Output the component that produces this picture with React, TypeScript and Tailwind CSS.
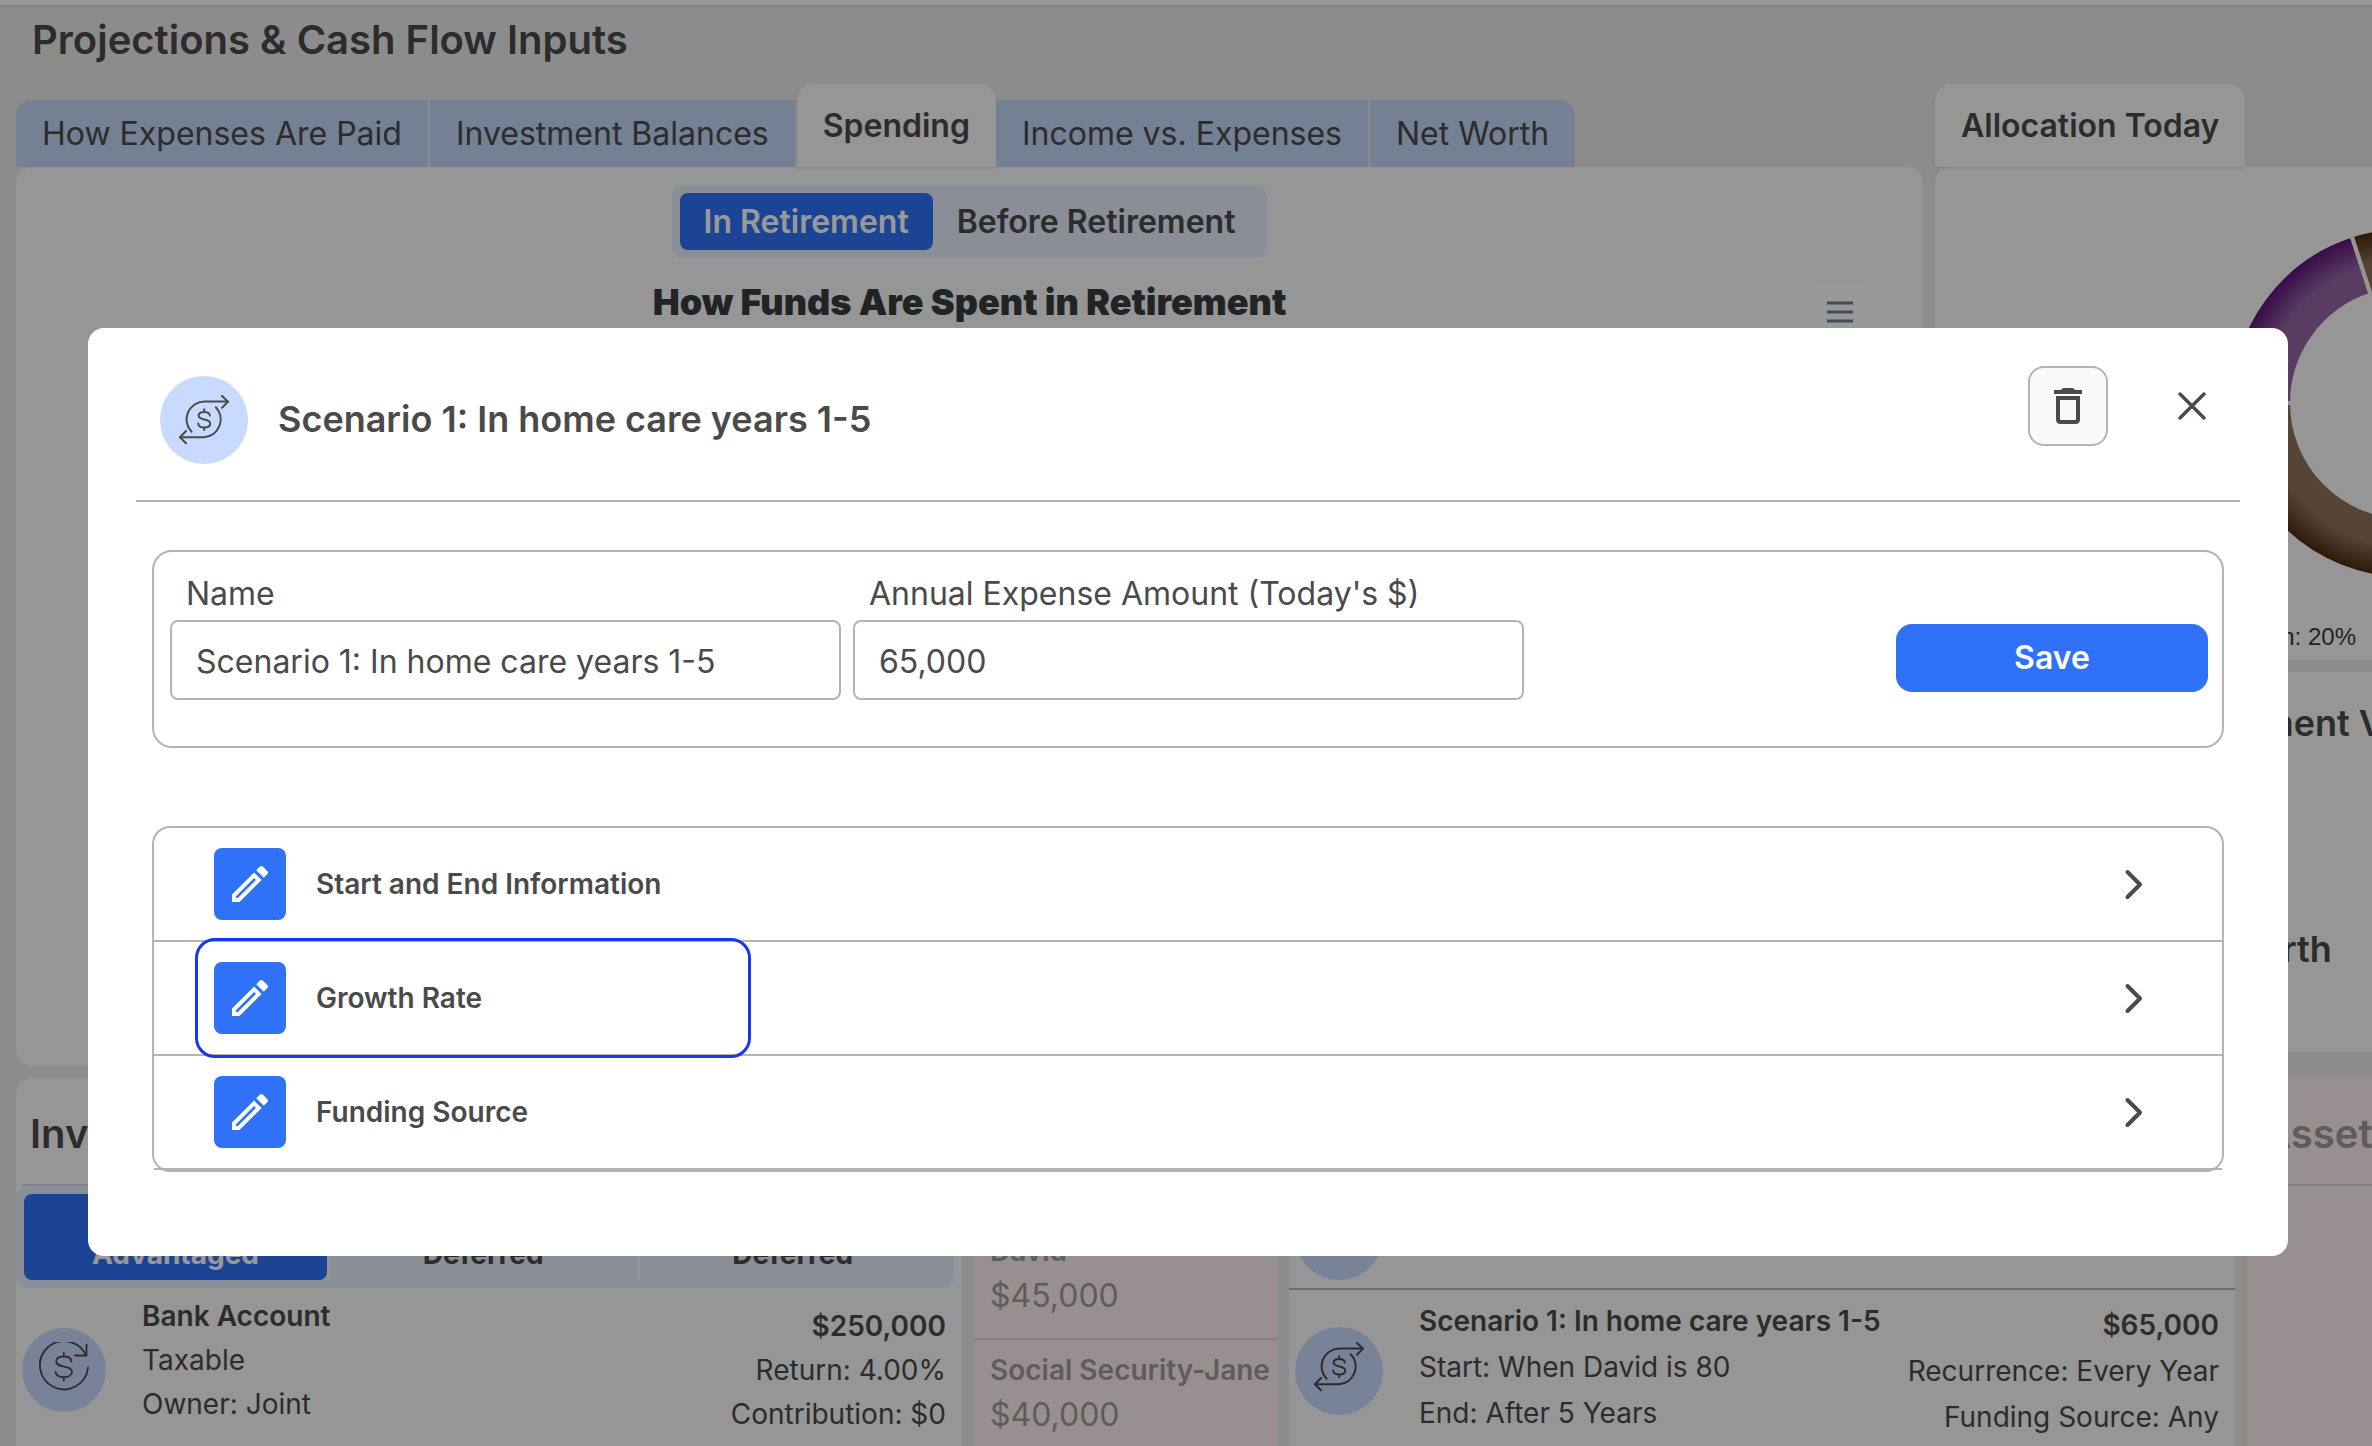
import React, { useState } from 'react';
import { MdDeleteOutline, MdOutlineEdit } from 'react-icons/md';

interface DetailRowProps {
  icon: React.ReactNode;
  title: string;
  lines: string[];
  amount: string;
  amountLines: string[];
  className: string;
  amountClassName: string;
}

const chartTabs = ['How Expenses Are Paid', 'Investment Balances', 'Spending', 'Income vs. Expenses', 'Net Worth'];
const sections = ['Start and End Information', 'Growth Rate', 'Funding Source'];
const accountTypes = ['Advantaged', 'Deferred', 'Deferred'];

function SwapDollarIcon() {
  return (
    <svg className="size-[50px]" viewBox="0 0 50 50" fill="none" stroke="#4a4a4a" strokeWidth="2" strokeLinecap="round" strokeLinejoin="round">
      <path d="M12.6 36.8A17.8 17.8 0 0 1 25 6.6H49" />
      <path d="M43 .9l6 5.7-6 6.2" />
      <path d="M36.8 12.2A17.8 17.8 0 0 1 25 42.2H1" />
      <path d="M7 36L1 42.2l6 6" />
      <path d="M30.8 20.6c0-2.2-2.4-3.7-5.6-3.7s-5.6 1.5-5.6 3.9c0 5 11.6 2.4 11.6 7.6 0 2.5-2.6 4-6 4s-6-1.6-6-3.9M25.2 14.2v2.5M25.2 32.6V35" />
    </svg>
  );
}

function RecurringDollarIcon() {
  return (
    <svg className="size-[50px]" viewBox="0 0 50 50" fill="none" stroke="#4a4a4a" strokeWidth="1.8" strokeLinecap="round" strokeLinejoin="round">
      <path d="M49 25.5A24.1 24.1 0 1 1 47 13.4" />
      <path d="M47.5 2.5v11H36" />
      <path d="M32.4 19.5c0-3-3-5-7.6-5s-7.6 2-7.6 5.1c0 6.8 15.8 3.3 15.8 10.2 0 3.3-3.5 5.4-8.2 5.4s-8.2-2.2-8.2-5.3M24.8 11v3.3M24.8 35.4v3.3" />
    </svg>
  );
}

function AllocationChart() {
  return (
    <svg className="h-[360px] w-[360px] shrink-0" viewBox="-180 -180 360 360" stroke="#fafafa" strokeWidth="4">
      <defs>
        <radialGradient id="purple" gradientUnits="userSpaceOnUse" cx="0" cy="0" r="174">
          <stop offset="0.82" stopColor="#9364a2" />
          <stop offset="1" stopColor="#5f147c" />
        </radialGradient>
        <radialGradient id="brown" gradientUnits="userSpaceOnUse" cx="0" cy="0" r="174">
          <stop offset="0.82" stopColor="#8f745a" />
          <stop offset="1" stopColor="#4c2a0e" />
        </radialGradient>
      </defs>
      <path fill="url(#purple)" d="M-176 0A176 176 0 0 1 -54.4 -167.4L-35.2 -108.3A114 114 0 0 0 -114 0Z" />
      <path fill="url(#brown)" d="M-54.4 -167.4A176 176 0 0 1 176 0L114 0A114 114 0 0 0 -35.2 -108.3Z" />
      <path fill="url(#brown)" d="M176 0A176 176 0 0 1 -176 0L-114 0A114 114 0 0 0 114 0Z" />
    </svg>
  );
}

function DetailRow({ icon, title, lines, amount, amountLines, className, amountClassName }: DetailRowProps) {
  return (
    <div className={`flex text-[28px] ${className}`}>
      {icon}
      <div className="flex-1">
        <h3 className="font-semibold">{title}</h3>
        {lines.map((line) => (
          <p key={line}>{line}</p>
        ))}
      </div>
      <div className={`text-right ${amountClassName}`}>
        <p className="font-semibold">{amount}</p>
        {amountLines.map((line) => (
          <p key={line}>{line}</p>
        ))}
      </div>
    </div>
  );
}

function Dashboard() {
  return (
    <div className="h-screen overflow-hidden bg-[#e9e9e9]">
      <div className="h-[7px] border-b-2 border-[#dedede] bg-[#fcfcfc]" />
      <h1 className="pt-[13px] pl-8 text-[40px] leading-[40px] font-semibold">Projections &amp; Cash Flow Inputs</h1>

      <div className="mt-6 flex gap-3 pl-4">
        <section className="min-w-0 flex-1">
          <div className="flex h-[83px] items-end text-[32px]" role="tablist">
            {chartTabs.map((tab) =>
              tab === 'Spending' ? (
                <button key={tab} role="tab" aria-selected="true" className="h-[83px] rounded-t-2xl bg-[#fafafa] px-[26px] font-semibold shadow-sm">
                  {tab}
                </button>
              ) : (
                <button key={tab} role="tab" className="h-[67px] border-r-2 border-[#e9e9e9] bg-[#c1d5f5] px-[26px] first:rounded-tl-2xl last:rounded-tr-2xl last:border-r-0">
                  {tab}
                </button>
              )
            )}
          </div>
          <div className="h-[899px] rounded-2xl bg-[#fafafa] pt-[18px]">
            <div className="mx-auto flex w-fit rounded-xl bg-[#e6edfc] p-2 text-[32px] font-semibold">
              <button className="h-[57px] rounded-lg bg-[#2f72f7] px-6 text-white">In Retirement</button>
              <button className="h-[57px] px-6">Before Retirement</button>
            </div>
            <div className="mt-[22px] grid grid-cols-[1fr_auto_1fr]">
              <h2 className="col-start-2 text-[36px] leading-[44px] font-black text-[#373d3f]">How Funds Are Spent in Retirement</h2>
              <button aria-label="Chart menu" className="mt-0.5 mr-[51px] flex size-16 items-center justify-center justify-self-end rounded-2xl bg-[#fefefe]">
                <svg className="size-7" viewBox="0 0 28 28" stroke="#6e8192" strokeWidth="3">
                  <path d="M1 3h26M1 12h26M1 21h26" />
                </svg>
              </button>
            </div>
          </div>
        </section>

        <section className="w-[437px] shrink-0">
          <div className="flex h-[83px] text-[32px]">
            <h2 className="flex items-center rounded-t-2xl bg-[#fafafa] px-[26px] font-semibold shadow-sm">Allocation Today</h2>
          </div>
          <div className="flex h-[493px] flex-col overflow-hidden rounded-tl-2xl bg-[#fafafa] pt-14">
            <div className="pl-[291px]">
              <AllocationChart />
            </div>
            <p className="mt-10 pr-4 text-right font-['Liberation_Sans'] text-[24px] leading-[28px] text-[#373d3f]">Education: 20%</p>
          </div>
          <div className="mt-3 flex h-[380px] flex-col gap-[182px] overflow-hidden bg-[#fafafa] pt-[29px] pl-[225px] text-[36px] leading-[44px] font-semibold whitespace-nowrap">
            <h2>Retirement Value</h2>
            <h2>Net worth</h2>
          </div>
        </section>
      </div>

      <div className="mt-3 flex h-[600px] gap-3 pl-4">
        <section className="min-w-0 flex-1 rounded-t-2xl bg-[#fafafa]">
          <h2 className="mx-1.5 h-[108px] border-b-2 border-[#d3d5db] pt-9 pl-2 text-[40px] leading-[40px] font-semibold">Investments</h2>
          <div className="mr-2 grid h-[102px] grid-cols-[303px_1fr_1fr] rounded-xl bg-[#e6edfc] p-2 text-[28px] leading-[34px] font-bold">
            {accountTypes.map((type, i) => (
              <button
                key={i}
                className={i === 0 ? 'rounded-lg bg-[#2f72f7] text-white' : 'border-l-3 border-[#fafafa]'}
              >
                Tax
                <br />
                {type}
              </button>
            ))}
          </div>
          <DetailRow
            className="pt-1.5 pr-4 pl-1.5 leading-[44px]"
            amountClassName="pt-2.5"
            icon={
              <div className="mt-[34px] mr-9 flex size-[84px] justify-center rounded-full bg-[#c9daff] pt-3.5">
                <RecurringDollarIcon />
              </div>
            }
            title="Bank Account"
            lines={['Taxable', 'Owner: Joint']}
            amount="$250,000"
            amountLines={['Return: 4.00%', 'Contribution: $0']}
          />
        </section>

        <section className="w-[303px] bg-[#fdf1f0] pl-4 whitespace-nowrap text-[#9d9999]">
          <h2 className="h-[108px] pt-9 text-[40px] leading-[40px] font-semibold">Income</h2>
          <div className="-ml-4 h-[154px] border-b-2 border-[#dad2d2] pt-[43px] pl-4">
            <h3 className="text-[28px] leading-[44px] font-semibold">David</h3>
            <p className="text-[32px] leading-[46px]">$45,000</p>
          </div>
          <h3 className="pt-2 text-[28px] leading-[44px] font-semibold">Social Security-Jane</h3>
          <p className="text-[32px] leading-[46px]">$40,000</p>
        </section>

        <section className="min-w-0 flex-1 bg-[#fafafa]">
          <div className="h-[212px] border-b-2 border-[#b8b8b8] pt-[114px] pl-1.5">
            <div className="size-[88px] rounded-full bg-[#c9daff]" />
          </div>
          <DetailRow
            className="pt-2 pr-4 pl-1.5 leading-[46px]"
            amountClassName="pt-1"
            icon={
              <div className="mt-[29px] mr-9 flex size-[88px] justify-center rounded-full bg-[#c9daff] pt-[15px]">
                <SwapDollarIcon />
              </div>
            }
            title="Scenario 1: In home care years 1-5"
            lines={['Start: When David is 80', 'End: After 5 Years']}
            amount="$65,000"
            amountLines={['Recurrence: Every Year', 'Funding Source: Any']}
          />
        </section>

        <section className="w-[125px] overflow-hidden bg-[#fdf1f0] text-[#9d9999]">
          <h2 className="h-[108px] border-b-2 border-[#d3d5db] pt-9 pl-[15px] text-[40px] leading-[40px] font-semibold">Assets</h2>
        </section>
      </div>
    </div>
  );
}

function ScenarioModal() {
  const [inputs, setInputs] = useState({
    name: 'Scenario 1: In home care years 1-5',
    amount: '65,000',
  });

  const handleInputChange = (e: React.ChangeEvent<HTMLInputElement>) => {
    setInputs({
      ...inputs,
      [e.target.name]: e.target.value,
    });
  };

  return (
    <div className="fixed inset-0 bg-black/40 pt-[328px] pr-[84px] pl-[88px]">
      <div role="dialog" aria-modal="true" aria-labelledby="modal-title" className="rounded-2xl bg-white px-12 pt-[38px] pb-[84px]">
        <header className="flex items-start justify-between border-b-2 border-[#b4b4b4] px-6 pb-9">
          <div className="flex items-center gap-[30px] pt-2.5">
            <div className="flex size-[88px] items-center justify-center rounded-full bg-[#c9daff]">
              <SwapDollarIcon />
            </div>
            <h2 id="modal-title" className="pb-0.5 text-[36px] leading-[44px] font-semibold">
              Scenario 1: In home care years 1-5
            </h2>
          </div>
          <div className="flex gap-15">
            <button aria-label="Delete" className="flex size-20 items-center justify-center rounded-2xl border-2 border-[#b4b4b4] bg-[#fafafa]">
              <MdDeleteOutline className="size-12" />
            </button>
            <button aria-label="Close" className="flex h-20 w-12 items-center justify-center">
              <svg className="size-7" viewBox="0 0 28 28" stroke="currentColor" strokeWidth="3.4" strokeLinecap="round">
                <path d="M2 2l24 24M26 2L2 26" />
              </svg>
            </button>
          </div>
        </header>

        <form
          className="mx-4 mt-12 flex items-end justify-between rounded-[20px] border-2 border-[#b4b4b4] pt-[22px] pr-3.5 pb-[46px] pl-4 text-[32px]"
          onSubmit={(e) => e.preventDefault()}
        >
          <div className="flex flex-1 gap-3">
            <div className="flex max-w-[671px] flex-1 flex-col gap-1.5">
              <label htmlFor="name" className="pl-4 leading-[40px]">
                Name
              </label>
              <input
                id="name"
                name="name"
                className="h-20 w-full rounded-lg border-2 border-[#b4b4b4] px-6 pt-0.5"
                value={inputs.name}
                onChange={handleInputChange}
              />
            </div>
            <div className="flex max-w-[671px] flex-1 flex-col gap-1.5">
              <label htmlFor="amount" className="pl-4 leading-[40px]">
                Annual Expense Amount (Today's $)
              </label>
              <input
                id="amount"
                name="amount"
                className="h-20 w-full rounded-lg border-2 border-[#b4b4b4] px-6 pt-0.5"
                value={inputs.amount}
                onChange={handleInputChange}
              />
            </div>
          </div>
          <button type="submit" className="mb-2 h-[68px] w-[312px] rounded-2xl bg-[#2f72f7] font-semibold text-white">
            Save
          </button>
        </form>

        <ul className="mx-4 mt-[78px] rounded-[18px] border-2 border-[#b4b4b4]">
          {sections.map((section) => (
            <li key={section} className="flex items-center justify-between border-b-2 border-[#b4b4b4] pr-18 pl-[45px]">
              <button
                className={`flex h-28 w-[548px] items-center gap-[30px] rounded-2xl px-[15px] text-[28px] font-semibold ${
                  section === 'Growth Rate' ? 'relative outline-3 outline-offset-1 outline-[#1a36f0]' : ''
                }`}
              >
                <span className="flex size-18 items-center justify-center rounded-lg bg-[#2f72f7] text-white">
                  <MdOutlineEdit className="size-12" />
                </span>
                {section}
              </button>
              <button aria-label={`Open ${section}`} className="flex size-8 items-center justify-center">
                <svg className="size-8" viewBox="0 0 32 32" fill="none" stroke="currentColor" strokeWidth="4" strokeLinecap="round" strokeLinejoin="round">
                  <path d="M9.5 4l12.5 12.5L9.5 29" />
                </svg>
              </button>
            </li>
          ))}
        </ul>
      </div>
    </div>
  );
}

function App() {
  return (
    <div className="font-[Inter,sans-serif] text-[#4a4a4a]">
      <Dashboard />
      <ScenarioModal />
    </div>
  );
}

export default App;
